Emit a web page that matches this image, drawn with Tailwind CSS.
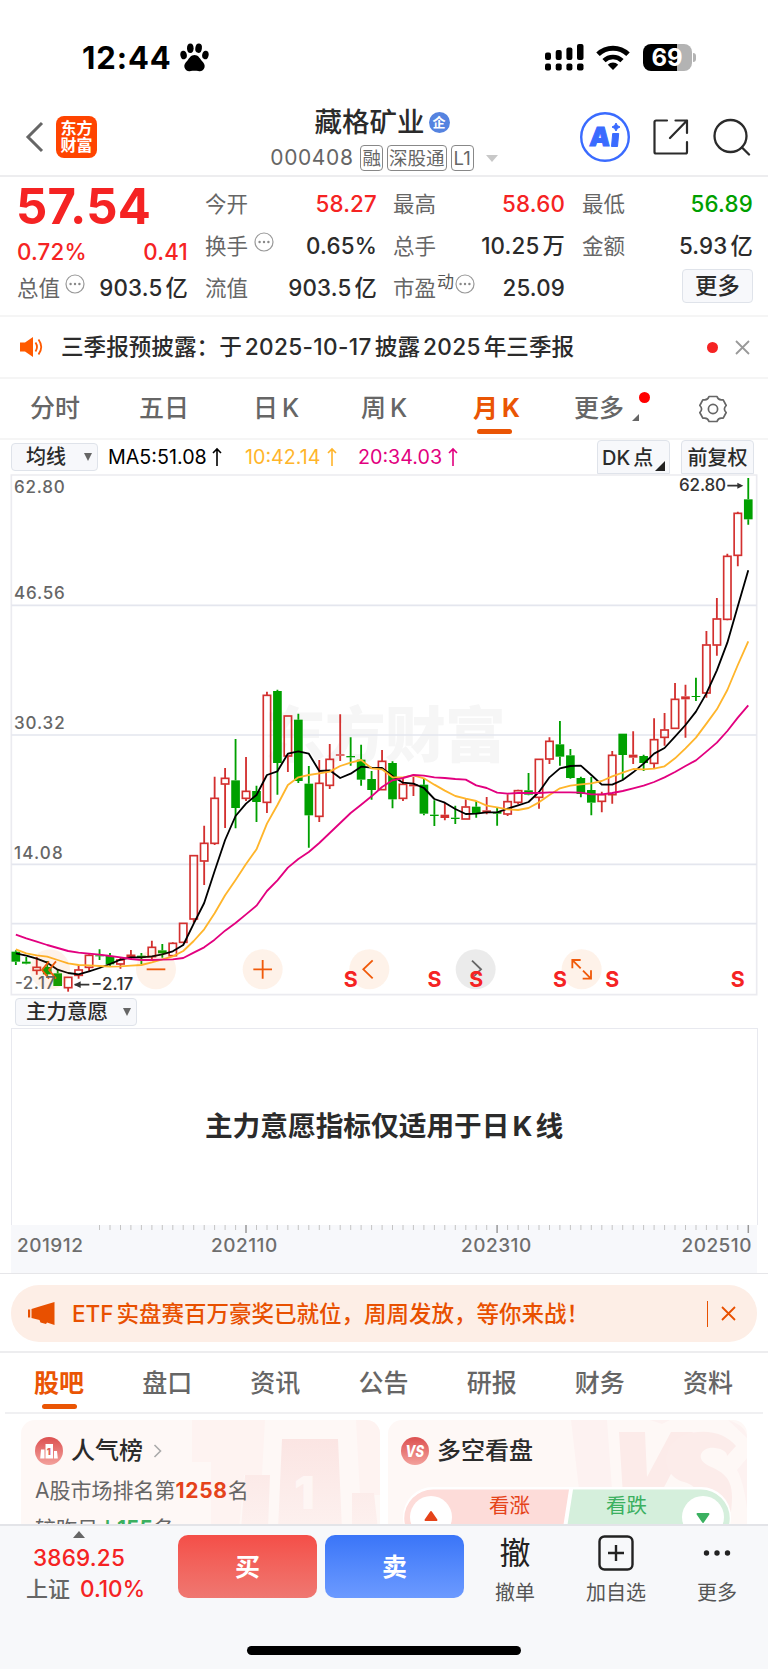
<!DOCTYPE html>
<html lang="zh-CN">

<head>
    <meta charset="UTF-8">
    <meta name="viewport" content="width=device-width, initial-scale=1.0">
    <title>藏格矿业 000408</title>
    <script src="https://cdn.jsdelivr.net/npm/@tailwindcss/browser@4"></script>
</head>

<body class="bg-white text-[#2b2b2b] font-['Inter','Noto_Sans_CJK_SC',sans-serif] w-[768px] h-[1669px] overflow-hidden flex flex-col whitespace-nowrap">

    <!-- Status bar -->
    <div class="h-[88px] shrink-0 flex items-center pt-[26px] pl-[82px] pr-[76px] text-black">
        <span class="text-[31px] font-bold leading-none tracking-[0.900px]">12:44</span>
        <svg class="w-[29px] h-[29px] ml-[8px]" viewBox="0 0 29 29">
            <ellipse cx="3.6" cy="12" rx="3.2" ry="4.3" transform="rotate(-12 3.6 12)" />
            <ellipse cx="10.3" cy="5.2" rx="3.3" ry="4.7" />
            <ellipse cx="18.6" cy="5.2" rx="3.3" ry="4.7" transform="rotate(8 18.6 5.2)" />
            <ellipse cx="25.4" cy="12" rx="3.2" ry="4.3" transform="rotate(12 25.4 12)" />
            <path d="M14.5 12c3.6 0 5 3 7 5.400 2.400 2.600 3.800 4.200 3 7.200-.8 3-3.500 4.200-6.200 3.500-2.500-.5-5.100-.5-7.600 0-2.700.7-5.400-.5-6.200-3.500-.8-3 .6-4.600 3-7.200 2-2.400 3.400-5.400 7-5.400z" />
        </svg>
        <svg class="w-[39px] h-[27px] ml-auto" viewBox="0 0 39 27">
            <rect x="0" y="8.500" width="6" height="7.500" rx="2" /><rect x="10.700" y="6" width="6" height="10" rx="2" />
            <rect x="21.400" y="3.500" width="6" height="12.500" rx="2" /><rect x="32" y="0" width="6.500" height="16" rx="2" />
            <rect x="0" y="19.500" width="6" height="7" rx="2" /><rect x="10.700" y="19.500" width="6" height="7" rx="2" />
            <rect x="21.400" y="19.500" width="6" height="7" rx="2" /><rect x="32" y="19.500" width="6.500" height="7" rx="2" />
        </svg>
        <svg class="w-[34px] h-[25px] ml-[12px]" viewBox="0 0 34 25" fill="none" stroke="#000">
            <path d="M2 9.300a21.500 21.500 0 0 1 30 0" stroke-width="5" />
            <path d="M8 15.600a13 13 0 0 1 18 0" stroke-width="4.600" />
            <path d="M17 25l-5.200-5.300a7.400 7.400 0 0 1 10.400 0z" fill="#000" stroke="none" />
        </svg>
        <div class="ml-[13px] w-[49px] h-[27px] rounded-[8px] overflow-hidden bg-[linear-gradient(90deg,#000_69%,#b3b3b3_69%)] text-white text-[24px] font-bold leading-[27px] text-center">69</div>
        <div class="w-[3px] h-[9px] ml-[1.500px] rounded-r-full bg-[#b3b3b3] -mr-[4px]"></div>
    </div>

    <!-- Header -->
    <header class="h-[89px] shrink-0 relative border-b-2 border-[#ededef] flex items-center pl-[25px] pr-[17px] pt-[10px]">
        <svg class="w-[19px] h-[32px]" viewBox="0 0 19 32" fill="none" stroke="#666" stroke-width="3"><path d="M17 2L3 16l14 14" /></svg>
        <div class="ml-[12px] w-[41px] h-[42px] rounded-[8px] bg-[#ff4400] text-white font-bold text-[16px] leading-[17px] text-center pt-[4px]">东方<br>财富</div>
        <div class="absolute left-[177px] w-[420px] top-[16px] flex flex-col items-center">
            <div class="flex items-center h-[36px] -ml-[10px]">
                <span class="text-[27.500px] leading-[36px] font-medium">藏格矿业</span>
                <span class="ml-[4px] w-[21px] h-[21px] rounded-full bg-[#5583e0] text-white font-bold text-[13px] leading-[20px] text-center">企</span>
            </div>
            <div class="flex items-center h-[28px] mt-[4px] text-[#666] ml-[-6px]">
                <span class="text-[21px] tracking-[0.600px] mr-[7px]">000408</span>
                <span class="border border-[#888] rounded-[4px] h-[26px] leading-[24px] text-[18.500px] px-[1px] mr-[4px]">融</span>
                <span class="border border-[#888] rounded-[4px] h-[26px] leading-[24px] text-[18.500px] px-[1px] mr-[4px]">深股通</span>
                <span class="border border-[#888] rounded-[4px] h-[26px] leading-[24px] text-[18.500px] px-[2px]">L1</span>
                <svg class="w-[12px] h-[7px] ml-[12px]" viewBox="0 0 12 7"><path d="M0 0h12L6 7z" fill="#c8c8c8" /></svg>
            </div>
        </div>
        <svg class="w-[50px] h-[50px] ml-auto" viewBox="0 0 50 50">
            <circle cx="25" cy="25" r="23.800" fill="none" stroke="#3a6bff" stroke-width="2.400" />
            <text x="9.500" y="34" font-size="26" font-weight="900" fill="#3a6bff" stroke="#3a6bff" stroke-width="1" transform="skewX(-4) translate(2 0)" textLength="20">A</text>
            <path d="M32.700 21.500h6l-1.200 13h-6z" fill="#3a6bff" stroke="#3a6bff" stroke-linejoin="round" />
            <path d="M36 11l1.400 2.600L40 15l-2.600 1.400L36 19l-1.400-2.600L32 15l2.600-1.400z" fill="#3a6bff" stroke="#3a6bff" />
        </svg>
        <svg class="w-[36px] h-[36px] ml-[23px]" viewBox="0 0 36 36" fill="none" stroke="#2b2b2b" stroke-width="2.200" stroke-linecap="round" stroke-linejoin="round">
            <path d="M14 1.500H3a1.500 1.500 0 0 0-1.500 1.500v30A1.500 1.500 0 0 0 3 34.500h29.500a1.500 1.500 0 0 0 1.500-1.500V23" />
            <path d="M22.500 1.500H34V14M34 1.500L17 19" />
        </svg>
        <svg class="w-[38px] h-[38px] ml-[24px]" viewBox="0 0 38 38" fill="none" stroke="#2b2b2b" stroke-width="2.300" stroke-linecap="round">
            <circle cx="17.500" cy="18" r="16" /><path d="M29 29.500l7 7" />
        </svg>
    </header>

    <!-- Quote -->
    <section class="h-[140px] shrink-0 border-b-2 border-[#f5f5f5] flex pl-[17px] pt-[6px] text-[22.300px] tracking-[0.200px] font-medium">
        <div class="w-[171px] mr-[17px]">
            <div class="h-[49px] leading-[47px] text-[49px] -ml-[1px] font-bold text-[#f52323]">57.54</div>
            <div class="h-[35px] leading-[40px] flex justify-between text-[#f52323]"><span>0.72%</span><span>0.41</span></div>
            <div class="h-[42px] leading-[42px] flex items-center">
                <span class="text-[#666] font-normal text-[21.500px] tracking-normal">总值</span>
                <svg class="w-[20px] h-[20px] ml-[5px] mb-[8px]" viewBox="0 0 20 20"><use href="#info" /></svg>
                <span class="ml-auto">903.5<span class="ml-[3px]">亿</span></span>
            </div>
        </div>
        <div class="w-[172px] mr-[16px] leading-[42px]">
            <div class="flex justify-between"><span class="text-[#666] font-normal text-[21.500px] tracking-normal">今开</span><span class="text-[#f52323]">58.27</span></div>
            <div class="flex items-center">
                <span class="text-[#666] font-normal text-[21.500px] tracking-normal">换手</span>
                <svg class="w-[20px] h-[20px] ml-[6px] mb-[8px]" viewBox="0 0 20 20">
                    <g id="info"><circle cx="10" cy="10" r="9" fill="none" stroke="#999" stroke-width="1.200" /><g fill="#888"><circle cx="5.600" cy="10" r="1.200" /><circle cx="10" cy="10" r="1.200" /><circle cx="14.400" cy="10" r="1.200" /></g></g>
                </svg>
                <span class="ml-auto">0.65%</span>
            </div>
            <div class="flex justify-between"><span class="text-[#666] font-normal text-[21.500px] tracking-normal">流值</span><span>903.5<span class="ml-[3px]">亿</span></span></div>
        </div>
        <div class="w-[172px] mr-[17px] leading-[42px]">
            <div class="flex justify-between"><span class="text-[#666] font-normal text-[21.500px] tracking-normal">最高</span><span class="text-[#f52323]">58.60</span></div>
            <div class="flex justify-between"><span class="text-[#666] font-normal text-[21.500px] tracking-normal">总手</span><span>10.25<span class="ml-[3px]">万</span></span></div>
            <div class="flex items-center">
                <span class="text-[#666] font-normal text-[21.500px] tracking-normal">市盈</span>
                <span class="text-[#555] font-normal text-[17px] leading-[20px] mb-[13px] ml-[1px]">动</span>
                <svg class="w-[20px] h-[20px] mb-[8px] ml-[1px]" viewBox="0 0 20 20"><use href="#info" /></svg>
                <span class="ml-auto">25.09</span>
            </div>
        </div>
        <div class="w-[171px] leading-[42px]">
            <div class="flex justify-between"><span class="text-[#666] font-normal text-[21.500px] tracking-normal">最低</span><span class="text-[#009f00]">56.89</span></div>
            <div class="flex justify-between"><span class="text-[#666] font-normal text-[21.500px] tracking-normal">金额</span><span>5.93<span class="ml-[3px]">亿</span></span></div>
            <div class="ml-auto mt-[2px] w-[71px] h-[34px] leading-[32px] border border-[#dfe3ea] rounded-[4px] bg-[#f7f8fb] text-center">更多</div>
        </div>
    </section>

    <!-- Notice -->
    <div class="h-[62px] shrink-0 border-b-2 border-[#f5f5f5] flex items-center pl-[20px] pr-[18px]">
        <svg class="w-[23px] h-[20px]" viewBox="0 0 23 20">
            <path d="M0 5.500h5L13 0v20l-8-5.500H0z" fill="#ff5a00" />
            <path d="M15.500 5.500q3 4.500 0 9M18.500 2.500q5.500 7.500 0 15" fill="none" stroke="#ff5a00" stroke-width="1.800" />
        </svg>
        <span class="ml-[18px] text-[22.600px] font-medium">三季报预披露：于<span class="mx-[3px] tracking-[0.350px]">2025-10-17</span>披露<span class="mx-[3px] tracking-[0.350px]">2025</span>年三季报</span>
        <span class="ml-auto w-[11px] h-[11px] rounded-full bg-[#f52323]"></span>
        <svg class="w-[15px] h-[15px] ml-[17px]" viewBox="0 0 15 15" stroke="#999" stroke-width="1.800"><path d="M1 1l13 13M14 1L1 14" /></svg>
    </div>

    <!-- Period tabs -->
    <nav class="h-[61px] shrink-0 border-b-2 border-[#f5f5f5] flex items-center pl-[30px] text-[25px] font-medium text-[#666]">
        <span class="w-[109px]">分时</span>
        <span class="w-[114px]">五日</span>
        <span class="w-[108px]">日<span class="ml-[4px]">K</span></span>
        <span class="w-[112px]">周<span class="ml-[4px]">K</span></span>
        <span class="relative w-[101px] text-[#ea5504] font-bold">月<span class="ml-[4px]">K</span>
            <i class="absolute left-[4px] -bottom-[7px] w-[35px] h-[5px] rounded-full bg-[#ea5504]"></i></span>
        <span class="relative w-[125px]">更多
            <i class="absolute left-[65px] top-[2px] w-[11px] h-[11px] rounded-full bg-[#f00]"></i>
            <svg class="absolute left-[58px] top-[24px] w-[7px] h-[7px]" viewBox="0 0 7 7"><path d="M7 0v7H0z" fill="#666" /></svg></span>
        <svg class="w-[28px] h-[28px]" viewBox="0 0 28 28" fill="none" stroke="#666" stroke-width="1.700" stroke-linejoin="round">
            <circle cx="14" cy="14" r="4.600" />
            <path d="M10 1.500h8q1.200 3.800 4.900 3.400l1.300-.1 3 5.700q-3.600 3.500 0 7l-3 5.700-1.300-.1q-3.700-.4-4.900 3.400h-8q-1.200-3.800-4.900-3.400l-1.300.1-3-5.700q3.600-3.500 0-7l3-5.700 1.300.1q3.700.4 4.900-3.400z" />
        </svg>
    </nav>

    <!-- Moving averages -->
    <div class="h-[34px] shrink-0 flex items-end pl-[11px] pr-[14px] text-[20px]">
        <div class="w-[87px] h-[28px] mb-[3px] leading-[26px] border border-[#dfe3ea] rounded-[4px] bg-[#f7f8fb] pl-[14px] pr-[5px] flex items-center justify-between font-medium">均线
            <svg class="w-[8px] h-[8px]" viewBox="0 0 8 8"><path d="M0 0h8L4 8z" fill="#666" /></svg></div>
        <div class="h-[34px] leading-[34px] flex text-[19.700px]">
            <span class="ml-[10px] w-[137px] text-black">MA5:51.08<svg class="inline ml-[5px] w-[10px] h-[20px] -mt-[3px]" viewBox="0 0 10 20" fill="none" stroke="currentColor" stroke-width="1.600"><path id="up" d="M5 19V2M1 6l4-4 4 4" /></svg></span>
            <span class="w-[113px] text-[#ffb52b]">10:42.14<svg class="inline ml-[6px] w-[10px] h-[20px] -mt-[3px]" viewBox="0 0 10 20" fill="none" stroke="currentColor" stroke-width="1.600"><use href="#up" /></svg></span>
            <span class="text-[#e2007f]">20:34.03<svg class="inline ml-[6px] w-[10px] h-[20px] -mt-[3px]" viewBox="0 0 10 20" fill="none" stroke="currentColor" stroke-width="1.600"><use href="#up" /></svg></span>
        </div>
        <div class="relative ml-auto w-[73px] h-[34px] leading-[34px] border border-[#dfe3ea] rounded-t-[4px] bg-[#f7f8fb] pl-[4px] font-medium">DK<span class="ml-[3px]">点</span>
            <svg class="absolute right-[4px] bottom-[2px] w-[10px] h-[10px]" viewBox="0 0 10 10"><path d="M10 0v10H0z" fill="#222" /></svg></div>
        <div class="ml-[11px] w-[73px] h-[34px] leading-[34px] border border-[#dfe3ea] rounded-t-[4px] bg-[#f7f8fb] text-center font-medium">前复权</div>
    </div>

    <!-- K line chart, three viewBox units per pixel -->
    <svg id="chart" class="w-[768px] h-[522px] shrink-0 block" viewBox="0 -501 2304 1566">
        <text x="795" y="349" font-size="182" font-weight="900" fill="#f6f6f6" textLength="722">东方财富</text>
        <g fill="none" stroke="#e4e6ee" stroke-width="5">
            <path d="M34-498H2270V1061H34z" stroke="#ebebf0" stroke-width="5" />
            <path d="M34-107H2270M34 282H2270M34 670H2270M34 848H2270" />
        </g>
        <g id="candles"></g>
        <g id="lines" fill="none" stroke-width="5.500" stroke-linejoin="round"></g>
        <g id="pads"></g>
        <g font-size="51" font-weight="500" fill="#666">
            <text x="42" y="-443" textLength="152">62.80</text>
            <text x="42" y="-127" textLength="152">46.56</text>
            <text x="42" y="265" textLength="152">30.32</text>
            <text x="42" y="653" textLength="146">14.08</text>
            <text x="45" y="1044" textLength="121">-2.17</text>
        </g>
        <g font-size="51" font-weight="500" fill="#333">
            <text x="2037" y="-449" textLength="141">62.80</text>
            <text x="273" y="1048" textLength="127">−2.17</text>
            <path d="M2182-466h40M224 1031h44" stroke="#333" stroke-width="5" />
            <path d="M2230-466l-18-9v18zM222 1031l20-10v20z" />
        </g>
        <g id="signals" fill="#f52323" font-size="64" font-weight="700" text-anchor="middle"></g>
    </svg>

    <!-- Sub indicator -->
    <div class="h-[32px] shrink-0 pl-[15px] pt-[2px]">
        <div class="w-[122px] h-[28px] leading-[26px] border border-[#dfe3ea] rounded-[4px] bg-[#f7f8fb] pl-[10px] pr-[5px] flex items-center justify-between text-[20.500px] font-medium">主力意愿
            <svg class="w-[8px] h-[8px]" viewBox="0 0 8 8"><path d="M0 0h8L4 8z" fill="#666" /></svg></div>
    </div>
    <div class="h-[197px] shrink-0 mx-[10.500px] border-[1.500px] border-b-0 border-[#e8e9ef] flex items-center justify-center text-[27.700px] font-bold">主力意愿指标仅适用于日<span class="mx-[3px]">K</span>线</div>
    <div class="h-[48px] shrink-0 mx-[11px] bg-[#f7f8fb] text-[19px] tracking-[0.500px] font-medium text-[#6e6e6e]">
        <svg id="axis" class="w-[746px] h-[9px] block" viewBox="0 0 746 9" stroke="#bbb"></svg>
        <div class="flex pl-[6px] pr-[5px] leading-[24px]">
            <span class="w-[194px]">201912</span><span class="w-[250px]">202110</span><span>202310</span><span class="ml-auto">202510</span>
        </div>
    </div>

    <!-- Banner -->
    <div class="h-[80px] shrink-0 border-t-[1.500px] border-b-2 border-t-[#e6e6e9] border-b-[#ededef] px-[11px] pt-[11px]">
        <div class="h-[57px] rounded-[28px] bg-[#fdeee6] flex items-center pl-[17px] pr-[21px] text-[#e85000]">
            <svg class="w-[27px] h-[23px]" viewBox="0 0 27 23" fill="#e85000"><path d="M0 7.500h2.200v8H0zM3.500 7l8-2.500L26.500 0v23l-6-2-1.500-.4-1 1.400-5.500-1.500-1-2.500-8-2z" /></svg>
            <span class="ml-[17px] text-[22.500px] font-medium">ETF<span class="ml-[3px]">实盘赛百万豪奖已就位，周周发放，等你来战！</span></span>
            <i class="ml-auto w-[1.500px] h-[26px] bg-[#e85000]"></i>
            <svg class="w-[15px] h-[15px] ml-[13px]" viewBox="0 0 15 15" stroke="#e85000" stroke-width="1.800"><path d="M1 1l13 13M14 1L1 14" /></svg>
        </div>
    </div>

    <!-- Content tabs -->
    <nav class="h-[61px] shrink-0 mx-[5px] border-b-2 border-[#f0f0f2] flex items-center pt-[2px] pl-[29px] pr-[30px] justify-between text-[25px] font-medium text-[#666]">
        <span class="relative font-bold text-[#ea5504]">股吧<i class="absolute left-[8px] -bottom-[7px] w-[35px] h-[5px] rounded-full bg-[#ea5504]"></i></span>
        <span>盘口</span><span>资讯</span><span>公告</span><span>研报</span><span>财务</span><span>资料</span>
    </nav>

    <!-- Cards -->
    <div class="flex h-[110px] shrink-0 overflow-hidden pt-[6px] pl-[21px] gap-[8px]">
        <div class="relative w-[359px] h-[150px] rounded-[14px] overflow-hidden bg-[#fef8f6] pl-[14px] pt-[14px]">
            <svg class="absolute inset-0 w-[359px] h-[110px]" viewBox="0 0 359 110">
                <defs><linearGradient id="fade" x1="0" y1="0" x2="0" y2="1"><stop offset="0" stop-color="#fbe5e3" /><stop offset="1" stop-color="#fdf1ef" /></linearGradient></defs>
                <path d="M171 0h73l-3 55h-18l-5 55h-28V42h-19zM335 0h24v75h-20z" fill="#fef3f1" />
                <path d="M224 55h25l-2 55h-27zM261 19h56l4 91h-64zM331 73h22l4 37h-26z" fill="url(#fade)" />
                <text x="273" y="89" font-size="46" font-weight="900" fill="#fef6f4">1</text>
            </svg>
            <div class="relative flex items-center h-[34px]">
                <svg class="w-[28px] h-[28px]" viewBox="0 0 28 28">
                    <defs><linearGradient id="badge" x1="0" y1="0" x2="0" y2="1"><stop offset="0" stop-color="#dc5050" /><stop offset="1" stop-color="#f3a19c" /></linearGradient></defs>
                    <circle cx="14" cy="14" r="14" fill="url(#badge)" />
                    <path d="M6 12.500h3.500v9H5.200zM10.500 7h7.500v14.500h-7.500zM19 14h3l.8 7.500H19z" fill="#fff" />
                    <text x="11.700" y="18" font-size="9" font-weight="900" fill="#e06060">1</text>
                </svg>
                <span class="ml-[8px] text-[24px] font-medium">人气榜</span>
                <svg class="w-[9px] h-[14px] ml-[10px]" viewBox="0 0 9 14" fill="none" stroke="#aaa" stroke-width="1.600"><path d="M1.500 1l6 6-6 6" /></svg>
            </div>
            <div class="relative mt-[7px] leading-[32px] text-[21px] text-[#666]">A股市场排名第<b class="text-[#e5431a] tracking-[0.700px]">1258</b>名</div>
            <div class="relative mt-[6px] leading-[32px] text-[21px] text-[#666]">较昨日<b class="text-[#3bb060]">↓155</b>名</div>
        </div>
        <div class="relative w-[359px] h-[150px] rounded-[14px] overflow-hidden bg-[#fef8f6] pl-[13px] pt-[14px]">
            <svg class="absolute inset-0 w-[359px] h-[110px]" viewBox="0 0 359 110">
                <path d="M183 0h36l5 70h-33zM262 0h20l-8 4zM340 0q19 6 19 18zM359 38v50q-4-28-10-38z" fill="#fdf2f1" />
                <path d="M231 12h26l2 45 24-45h22l-42 80h-27z" fill="#fcebe9" />
                <path d="M348 26q-14-16-38-14c-36 2-42 42-14 50 14 4 15 12 15 30h32c4-30-3-38-22-46-16-8-6-20 6-18 8 1 12 4 12 8z" fill="#fcecea" />
            </svg>
            <div class="relative flex items-center h-[34px]">
                <svg class="w-[28px] h-[28px]" viewBox="0 0 28 28">
                    <circle cx="14" cy="14" r="14" fill="url(#badge)" />
                    <text x="4.500" y="20" font-size="16" font-weight="800" font-style="italic" fill="#fff" textLength="18.500" lengthAdjust="spacingAndGlyphs">VS</text>
                </svg>
                <span class="ml-[8px] text-[24px] font-medium">多空看盘</span>
            </div>
            <div class="relative mt-[19px] ml-[2px] w-[328px] h-[60px]">
                <svg class="absolute inset-0 w-[328px] h-[60px]" viewBox="0 0 328 60">
                    <path d="M30 1h268a29 29 0 0 1 0 58H30A29 29 0 0 1 30 1z" fill="#fff" stroke="#fff" stroke-width="2" />
                    <path d="M30 2.500h136L157 60H30A28 28 0 0 1 30 2.500z" fill="#fddcd9" />
                    <path d="M170 2.500h128A28 28 0 0 1 298 60H161z" fill="#d5efdc" />
                    <circle cx="28" cy="30" r="21" fill="#fff" /><circle cx="300" cy="30" r="21" fill="#fff" />
                    <path d="M28 25l5.500 8h-11z" fill="#e5431a" stroke="#e5431a" stroke-width="2" stroke-linejoin="round" />
                    <path d="M300 35l5.500-8h-11z" fill="#3bb060" stroke="#3bb060" stroke-width="2" stroke-linejoin="round" />
                </svg>
                <span class="absolute left-[86px] top-[3px] leading-[32px] text-[20.500px] text-[#e5431a]">看涨</span>
                <span class="absolute left-[203px] top-[3px] leading-[32px] text-[20.500px] text-[#3bb060]">看跌</span>
            </div>
        </div>
    </div>

    <!-- Bottom bar -->
    <footer class="relative flex-1 border-t-2 border-[#e3e4e8] bg-[#f7f8fa]">
        <div class="flex pt-[9px]">
            <div class="relative w-[153px] ml-[10px] flex flex-col text-[22.500px] font-medium text-[#f52323]">
                <svg class="w-[12px] h-[7px] -mt-[4px] ml-[63px]" viewBox="0 0 12 7"><path d="M6 0l6 7H0z" fill="#666" /></svg>
                <div class="leading-[30px] mt-[5px] ml-[23px] tracking-[0.200px]">3869.25</div>
                <div class="leading-[32px] ml-[16px]"><span class="text-[#666] text-[22px] mr-[10px]">上证</span>0.10%</div>
            </div>
            <div class="ml-[15px] w-[139px] h-[63px] rounded-[10px] bg-linear-to-b from-[#f44e48] to-[#ef7771] text-white text-[25px] font-bold leading-[64px] text-center">买</div>
            <div class="ml-[8px] w-[139px] h-[63px] rounded-[10px] bg-linear-to-b from-[#3a75f8] to-[#6c9aff] text-white text-[25px] font-bold leading-[64px] text-center">卖</div>
            <div class="w-[102px] flex flex-col items-center text-[20px] text-[#555]"><span class="h-[36px] leading-[36px] text-[31px] text-[#222]">撤</span><span class="leading-[30px] mt-[7px]">撤单</span></div>
            <div class="w-[100px] flex flex-col items-center text-[20px] text-[#555]">
                <svg class="w-[36px] h-[36px]" viewBox="0 0 36 36" fill="none" stroke="#222" stroke-width="2.400"><rect x="1.500" y="1.500" width="33" height="33" rx="5" /><path d="M18 10v16M10 18h16" /></svg>
                <span class="leading-[30px] mt-[7px]">加自选</span></div>
            <div class="w-[102px] flex flex-col items-center text-[20px] text-[#555]">
                <svg class="w-[28px] h-[36px]" viewBox="0 0 28 36" fill="#222"><circle cx="3.500" cy="18" r="2.700" /><circle cx="14" cy="18" r="2.700" /><circle cx="24.500" cy="18" r="2.700" /></svg>
                <span class="leading-[30px] mt-[7px]">更多</span></div>
        </div>
        <div class="absolute left-[247px] bottom-[14px] w-[274px] h-[9px] rounded-full bg-black"></div>
    </footer>

    <script>
        const X0 = 47.5, STEP = 31.39;
        const x = i => X0 + i * STEP;

        // [kind, body top, body bottom, wick top, wick bottom]; r = rise, g = fall, s = solid rise
        const candles = [
            ['g', 932, 962, 928, 972], ['g', 962, 968, 948, 970], ['r', 978, 989, 948, 1001], ['g', 978, 1000, 960, 1010],
            ['g', 997, 1035, 985, 1035], ['r', 1008, 1041, 1008, 1052], ['r', 986, 1004, 972, 1013], ['r', 942, 980, 940, 990],
            ['g', 943, 946, 925, 957], ['g', 945, 970, 936, 975], ['r', 956, 970, 950, 983], ['r', 942, 948, 927, 955],
            ['g', 944, 950, 936, 970], ['r', 918, 948, 899, 958], ['g', 928, 937, 909, 950], ['r', 906, 945, 904, 948],
            ['r', 846, 905, 846, 905], ['r', 643, 835, 643, 845], ['r', 606, 661, 554, 732], ['r', 471, 608, 407, 612],
            ['r', 411, 430, 381, 561], ['g', 418, 501, 294, 562], ['r', 450, 473, 348, 480], ['g', 450, 483, 434, 543],
            ['r', 162, 485, 152, 516], ['g', 150, 366, 146, 461], ['r', 224, 346, 224, 393], ['g', 236, 420, 218, 426],
            ['g', 428, 523, 375, 620], ['r', 426, 527, 357, 543], ['r', 354, 434, 309, 444], ['s', 340, 344, 220, 360],
            ['g', 345, 349, 289, 374], ['g', 356, 416, 311, 434], ['g', 414, 447, 390, 476], ['r', 360, 447, 327, 447],
            ['g', 366, 475, 361, 502], ['r', 429, 473, 408, 480], ['s', 430, 436, 408, 465], ['g', 431, 518, 414, 523],
            ['g', 521, 525, 478, 555], ['s', 521, 531, 486, 538], ['g', 530, 534, 494, 549], ['r', 497, 535, 475, 535],
            ['g', 497, 518, 480, 530], ['s', 508, 516, 468, 520], ['g', 513, 518, 500, 554], ['r', 481, 520, 460, 525],
            ['r', 448, 485, 446, 490], ['g', 448, 461, 396, 463], ['r', 354, 470, 354, 503], ['r', 300, 355, 289, 369],
            ['g', 310, 347, 240, 374], ['g', 343, 411, 324, 413], ['g', 411, 459, 407, 469], ['g', 447, 485, 408, 523],
            ['r', 460, 482, 452, 514], ['r', 342, 462, 330, 488], ['g', 278, 342, 278, 416], ['s', 341, 350, 271, 369],
            ['g', 345, 366, 341, 390], ['r', 295, 368, 232, 382], ['r', 266, 290, 216, 314], ['r', 174, 263, 126, 264],
            ['s', 166, 175, 131, 290], ['g', 165, 168, 110, 180], ['r', 11, 157, -30, 170], ['r', -67, 13, -129, 44],
            ['r', -255, -64, -262, -62], ['r', -384, -256, -388, -224], ['g', -425, -365, -489, -349]
        ];
        document.getElementById('candles').innerHTML = candles.map(([k, t, b, wt, wb], i) => {
            const c = k === 'g' ? '#00a000' : '#d3302f', cx = x(i);
            const wick = `<path d="M${cx} ${wt}V${t}M${cx} ${b}V${wb}" stroke="${c}" stroke-width="5.500"/>`;
            return wick + (k === 'r'
                ? `<rect x="${cx - 11}" y="${t + 1}" width="22" height="${b - t - 2}" fill="none" stroke="${c}" stroke-width="5"/>`
                : `<rect x="${cx - 13}" y="${t}" width="26" height="${b - t}" fill="${c}"/>`);
        }).join('');

        const averages = {
            '#000': [937, 944, 953, 965, 986, 996, 1000, 991, 981, 969, 956, 949, 949, 946, 940, 931, 912, 848, 786, 690, 597, 525, 488, 462, 402, 391, 338, 331, 338, 390, 388, 411, 398, 377, 380, 381, 405, 425, 428, 441, 474, 485, 504, 519, 518, 514, 514, 503, 493, 483, 453, 409, 382, 375, 374, 402, 431, 431, 417, 394, 368, 338, 321, 287, 252, 212, 157, 88, 5, -104, -212],
            '#ffb52b': [925, 937, 943, 947, 957, 967, 972, 973, 975, 977, 976, 974, 972, 964, 955, 946, 930, 900, 865, 817, 763, 717, 669, 625, 548, 492, 432, 409, 402, 397, 392, 375, 365, 357, 382, 385, 409, 409, 403, 412, 431, 449, 465, 473, 480, 494, 499, 505, 507, 501, 484, 462, 442, 434, 430, 427, 420, 406, 395, 384, 385, 383, 376, 352, 322, 290, 248, 205, 147, 72, 1],
            '#e2007f': [881, 892, 902, 912, 921, 930, 935, 938, 941, 945, 949, 954, 957, 957, 956, 955, 951, 935, 919, 896, 869, 846, 820, 794, 750, 718, 680, 654, 633, 606, 576, 546, 516, 491, 466, 438, 418, 411, 402, 404, 409, 411, 414, 416, 433, 441, 455, 458, 456, 456, 456, 454, 454, 454, 455, 460, 460, 456, 450, 442, 434, 423, 409, 393, 375, 358, 332, 305, 270, 230, 193]
        };
        document.getElementById('lines').innerHTML = Object.entries(averages).map(([c, ys]) =>
            `<polyline stroke="${c}" points="${ys.map((y, i) => x(i) + ',' + y).join(' ')}"/>`).join('');

        // round chart controls
        const pads = [
            [150, 'M-3-24l-21 26 21 26M18-24l-21 26 21 26'], [468, 'M-28 0h56'], [788, 'M-28 0h56M0-28v56'],
            [1108, 'M10-27l-28 27 28 27'], [1427, 'M-11-26l27 26-27 26'], [1745, 'M-28-3v-25h25M-27-27l24 24M3 28h25v-25M4 4l23 23']
        ];
        document.getElementById('pads').innerHTML = pads.map(([cx, d], i) =>
            `<g transform="translate(${cx} 985)"><circle r="60" fill="${i === 4 ? '#00000014' : '#f9731618'}"/>
             <path d="${d}" fill="none" stroke="${i === 4 ? '#666' : '#f05a0a'}" stroke-width="5.500"/></g>`).join('');

        document.getElementById('signals').innerHTML = [32, 40, 44, 52, 57, 69].map(i =>
            `<text x="${x(i)}" y="1037">S</text>`).join('');

        let ticks = '';
        for (let i = 8; i <= 70; i++) {
            const big = i === 22 || i === 46 || i === 70;
            ticks += `<path d="M${(x(i) / 3 - 11).toFixed(1)} 0V${big ? 8 : 5}" stroke-width="${big ? 1.5 : 1}" stroke="${big ? '#999' : '#c4c4c4'}"/>`;
        }
        document.getElementById('axis').innerHTML = ticks;
    </script>
</body>

</html>
